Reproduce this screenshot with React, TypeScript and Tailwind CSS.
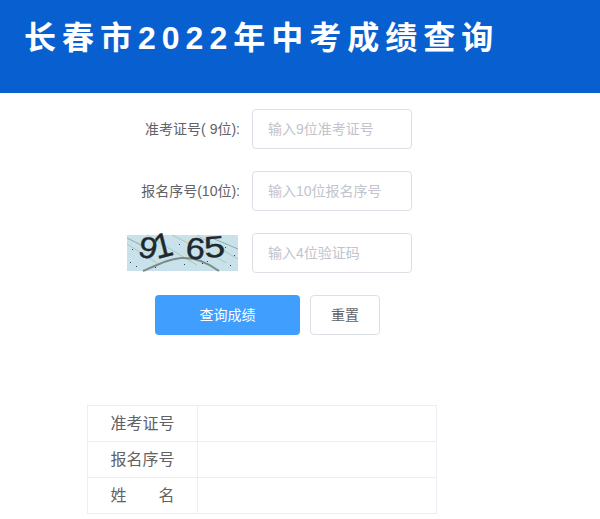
const sans = "font-['Liberation_Sans','Noto_Sans_CJK_SC',sans-serif]";

function Captcha() {
  return (
    <svg width="111" height="36" viewBox="0 0 111 36" className="block mr-0.5 overflow-visible">
      <rect width="111" height="36" fill="#c9e1ea" />
      <path d="M0 9 L30 28 M20 0 L70 30 M45 0 L100 28 M70 0 L111 24" stroke="#a9c9b8" strokeWidth="1" fill="none" />
      <path d="M0 3 L14 10 M85 3 L111 14" stroke="#8fa9a8" strokeWidth="1" fill="none" />
      <path d="M16 36 C32 29 42 24 54 23 C68 22 80 27 92 36" stroke="#7d8a88" strokeWidth="2" fill="none" />
      <g fill="#20282c" stroke="#20282c" strokeWidth="0.4" fontFamily="'Liberation Sans',sans-serif" fontSize="30">
        <text transform="translate(10 21) rotate(12) scale(1.1 1)">9</text>
        <text transform="translate(30 24) rotate(-14) scale(1.1 1.15)">1</text>
        <text transform="translate(58 23) rotate(5) scale(1.15 1)">6</text>
        <text transform="translate(78 23) rotate(-5) scale(1.25 1)">5</text>
      </g>
      <g fill="#26405a">
        <rect x="3" y="27" width="1" height="1" />
        <rect x="9" y="31" width="1" height="1" />
        <rect x="5" y="14" width="1" height="1" />
        <rect x="28" y="32" width="1" height="1" />
        <rect x="52" y="9" width="1" height="1" />
        <rect x="57" y="29" width="1" height="1" />
        <rect x="75" y="28" width="1" height="1" />
        <rect x="80" y="26" width="1" height="1" />
        <rect x="98" y="12" width="1" height="1" />
        <rect x="103" y="30" width="1" height="1" />
        <rect x="107" y="20" width="1" height="1" />
      </g>
    </svg>
  );
}

function Row({ label, placeholder }: { label: React.ReactNode; placeholder: string }) {
  return (
    <div className="flex items-center h-10 mb-[22px]">
      <div className="w-[240px] flex justify-end text-sm text-[#606266]">{label}</div>
      <input
        placeholder={placeholder}
        className="ml-3 w-40 h-10 px-[15px] text-sm text-[#606266] bg-white border border-[#dcdfe6] rounded outline-none placeholder:text-[#c0c4cc]"
      />
    </div>
  );
}

export default function App() {
  const rows = ["准考证号", "报名序号"];
  return (
    <div className={`h-[519px] w-[600px] overflow-hidden bg-white ${sans}`}>
      <div className="h-[93px] bg-[#0860d0] pl-6 pt-[15px]">
        <h1 className="text-[32px] leading-[46px] font-bold tracking-[6px] text-white">长春市2022年中考成绩查询</h1>
      </div>
      <div className="pt-4">
        <Row label="准考证号( 9位):" placeholder="输入9位准考证号" />
        <Row label="报名序号(10位):" placeholder="输入10位报名序号" />
        <Row label={<Captcha />} placeholder="输入4位验证码" />
        <div className="flex pl-[155px] gap-2.5">
          <button className="w-[145px] h-10 rounded bg-[#409eff] text-sm text-white">查询成绩</button>
          <button className="w-[70px] h-10 rounded border border-[#dcdfe6] bg-white text-sm text-[#606266]">重置</button>
        </div>
      </div>
      <div className="ml-[87px] mt-[70px] w-[350px] border border-[#ebeef5] border-b-0 text-base text-[#606266]">
        {rows.map((r) => (
          <div key={r} className="flex h-9 border-b border-[#ebeef5]">
            <div className="w-[110px] flex items-center justify-center border-r border-[#ebeef5]">{r}</div>
          </div>
        ))}
        <div className="flex h-9 border-b border-[#ebeef5]">
          <div className="w-[110px] flex items-center justify-center gap-8 border-r border-[#ebeef5]">
            <span>姓</span>
            <span>名</span>
          </div>
        </div>
      </div>
    </div>
  );
}
